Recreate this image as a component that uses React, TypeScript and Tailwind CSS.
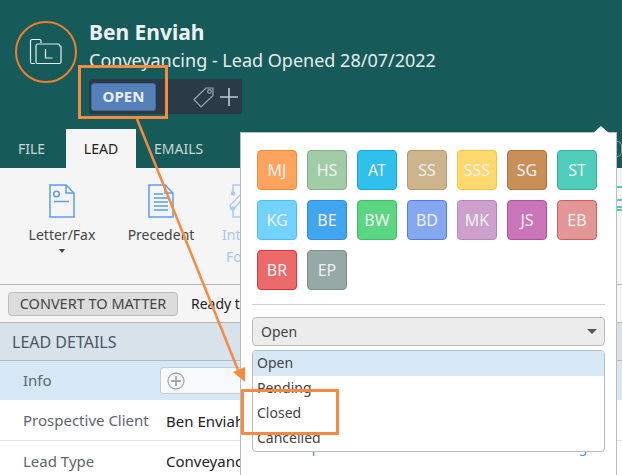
const chips = [
  { label: "MJ", cls: "bg-[#ffa45f] border-[#f98a33]" },
  { label: "HS", cls: "bg-[#a1cca5] border-[#7eb285]" },
  { label: "AT", cls: "bg-[#2fc0ee] border-[#1ba5d8]" },
  { label: "SS", cls: "bg-[#ceb48d] border-[#b89a68]" },
  { label: "SSS", cls: "bg-[#ffd96e] border-[#f8c838]" },
  { label: "SG", cls: "bg-[#c98f59] border-[#b0743e]" },
  { label: "ST", cls: "bg-[#4fccba] border-[#38ae9c]" },
  { label: "KG", cls: "bg-[#73d2fe] border-[#45c0fa]" },
  { label: "BE", cls: "bg-[#42a5f0] border-[#2c8ed8]" },
  { label: "BW", cls: "bg-[#5bd682] border-[#3fbb66]" },
  { label: "BD", cls: "bg-[#86a8f0] border-[#4f7eea]" },
  { label: "MK", cls: "bg-[#cda0cd] border-[#b885b8]" },
  { label: "JS", cls: "bg-[#ca75ba] border-[#b153a0]" },
  { label: "EB", cls: "bg-[#e39696] border-[#d26060]" },
  { label: "BR", cls: "bg-[#ea6a6a] border-[#dc3838]" },
  { label: "EP", cls: "bg-[#95a9a6] border-[#7a908d]" },
];

const statuses = ["Open", "Pending", "Closed", "Cancelled"];

const FolderIcon = () => (
  <svg width="34" height="28" viewBox="0 0 34 28" fill="none" stroke="#e6f0f0" strokeWidth="1.2">
    <path d="M6 25.5H3a1.5 1.5 0 0 1-1.5-1.5V3A1.5 1.5 0 0 1 3 1.5h7.5a1.5 1.5 0 0 1 1.500 1.500V5" />
    <path d="M7 7.500a1.500 1.500 0 0 1 1.500-1.500h21a1.500 1.500 0 0 1 1 1v1h1a.6.6 0 0 1 .5.5V24a1.500 1.500 0 0 1-1.500 1.500H8.500A1.500 1.500 0 0 1 7 24z" />
    <path d="M16.500 11v9h7" />
  </svg>
);

const TagIcon = () => (
  <svg width="22" height="22" viewBox="0 0 22 22" fill="none" stroke="#9aa8b0" strokeWidth="1.200">
    <path d="M1 13.500 13 2h7v7.500L8 21z" />
    <circle cx="16.500" cy="5.500" r="1.800" />
  </svg>
);

const PlusIcon = () => (
  <svg width="20" height="20" viewBox="0 0 20 20" stroke="#c3cacf" strokeWidth="1.600">
    <path d="M10 1v18M1 10h18" />
  </svg>
);

const LetterIcon = () => (
  <svg width="26" height="34" viewBox="0 0 26 34" fill="none" stroke="#5b9eea" strokeWidth="1.500">
    <path d="M1 1h16l8 8v24H1z" />
    <path d="M17 1v8h8" />
    <circle cx="7.500" cy="10" r="2.800" />
    <path d="M5 17.500h15" />
  </svg>
);

const PrecedentIcon = () => (
  <svg width="26" height="34" viewBox="0 0 26 34" fill="none" stroke="#5b9eea" strokeWidth="1.500">
    <path d="M1 1h16l8 8v24H1z" />
    <path d="M17 1v8h8M6 10h9M6 14h14M6 18h14M6 22h14M6 26h14" />
  </svg>
);

const IntakeIcon = () => (
  <svg width="30" height="34" viewBox="0 0 30 34" fill="none" stroke="#aacdf2" strokeWidth="1.500">
    <path d="M4 9V1h24v32H4v-8" />
    <circle cx="4" cy="9.500" r="1.500" fill="#aacdf2" />
    <circle cx="4" cy="24.500" r="1.500" fill="#aacdf2" />
    <path d="M1 21.500 2 25l3.500-1L14 14l-3-3z" />
  </svg>
);

const Field = ({ label, children, cls }: { label: string; children: React.ReactNode; cls: string }) => (
  <div className={`flex items-center ${cls}`}>
    <div className="w-[160px] shrink-0 pl-[23px] text-[#5c6670] whitespace-nowrap">{label}</div>
    {children}
  </div>
);

export default function App() {
  return (
    <div
      className="relative w-[622px] h-[475px] overflow-hidden bg-white text-[15px]"
      style={{ fontFamily: '"Noto Sans", "Open Sans", sans-serif' }}
    >
      {/* Header */}
      <header className="h-[168px] bg-[#165a5a] flex flex-col">
        <div className="h-[129px] flex pl-[15px] pt-[21px]">
          <div className="w-[62px] h-[62px] rounded-full border-2 border-[#ee7f2d] flex items-center justify-center">
            <FolderIcon />
          </div>
          <div className="pl-[12px] -mt-[3px]">
            <div className="text-[21px] leading-[29px] font-bold text-[#eef2f4]">Ben Enviah</div>
            <div className="text-[18px] leading-[26px] text-[#e6eef0] whitespace-nowrap">
              Conveyancing - Lead Opened 28/07/2022
            </div>
            <div className="mt-[6px] w-[153px] h-[35px] bg-[#2a3a47] rounded-[2px] flex items-center pl-[2px]">
              <div className="w-[65px] h-[28px] rounded-[3px] bg-[#5580b8] border border-[#46699c] flex items-center justify-center text-[15px] font-bold text-[#e9eff7]">
                OPEN
              </div>
              <div className="ml-[37px] flex items-center gap-[4px]">
                <TagIcon />
                <PlusIcon />
              </div>
            </div>
          </div>
        </div>
        <nav className="flex items-stretch h-[39px] text-[14px] leading-none">
          <div className="w-[66px] pl-[18px] flex items-center text-[#c9d6d8]">FILE</div>
          <div className="w-[70px] bg-[#f5f5f5] flex items-center justify-center text-[#222]">LEAD</div>
          <div className="pl-[18px] flex items-center text-[#c9d6d8]">EMAILS</div>
          <div className="ml-auto w-[5px] flex items-center">
            <div className="w-[5px] h-[16px] rounded-r-full border-r border-y border-[#7fa3a3]" />
          </div>
        </nav>
      </header>

      {/* Ribbon */}
      <section className="h-[117px] bg-[#f5f5f5] border-b border-[#b8b8b8] flex text-[14px] text-[#444]">
        <div className="w-[124px] flex flex-col items-center pt-[16px]">
          <LetterIcon />
          <div className="mt-[7px] leading-[20px]">Letter/Fax</div>
          <div className="mt-[4px] w-0 h-0 border-x-[3px] border-x-transparent border-t-[4px] border-t-[#444]" />
        </div>
        <div className="w-[74px] flex flex-col items-center pt-[16px]">
          <PrecedentIcon />
          <div className="mt-[7px] leading-[20px]">Precedent</div>
        </div>
        <div className="pl-[24px] pt-[16px] text-[#a9c9ea] leading-[22px]">
          <div className="ml-[7px]">
            <IntakeIcon />
          </div>
          <div className="mt-[6px]">Intake</div>
          <div className="pl-[4px]">Form</div>
        </div>
        <div className="ml-auto w-[5px] pt-[18px] flex flex-col">
          <div className="h-[2px] bg-[#4fccba]" />
          <div className="mt-[11px] h-[2px] bg-[#4fccba]" />
          <div className="mt-[5px] h-[2px] bg-[#4fccba]" />
          <div className="mt-[1px] h-[2px] bg-[#4fccba]" />
        </div>
      </section>

      {/* Convert bar */}
      <div className="h-[37px] bg-[#f5f5f5] flex items-center pl-[8px] gap-[13px] text-[14px]">
        <div className="w-[170px] h-[24px] rounded-[4px] bg-[#dcdcdc] border border-[#bdbdbd] flex items-center justify-center text-[14.5px] text-[#444] whitespace-nowrap">
          CONVERT TO MATTER
        </div>
        <div className="text-[#222] whitespace-nowrap">Ready to convert</div>
      </div>

      {/* Lead details */}
      <div className="h-[39px] bg-[#d8e2eb] border-y border-[#b8b8b8] flex items-center pl-[12px] text-[16px] text-[#4a5560]">
        LEAD DETAILS
      </div>
      <Field label="Info" cls="h-[39px] bg-[#d6e7f6]">
        <div className="w-[200px] h-[27px] rounded-[3px] bg-[#f6fafd] border border-[#c4ccd4] flex items-center pl-[6px]">
          <svg width="18" height="18" viewBox="0 0 18 18" fill="none" stroke="#a4a9ad" strokeWidth="1.300">
            <circle cx="9" cy="9" r="8" />
            <path d="M9 4v10M4 9h10" strokeWidth="1.800" />
          </svg>
        </div>
      </Field>
      <Field label="Prospective Client" cls="h-[41px] border-b border-[#e0e0e0]">
        <div className="pl-[6px] mt-[3px] text-[#222] whitespace-nowrap">Ben Enviah</div>
      </Field>
      <Field label="Lead Type" cls="h-[40px]">
        <div className="pl-[6px] text-[#222] whitespace-nowrap">Conveyancing</div>
      </Field>

      {/* Popover */}
      <div className="absolute z-0 left-[240px] top-[132px] w-[377px] h-[350px] bg-white border border-[#bdbdbd] px-[11px] pt-[17px]">
        <div className="absolute -top-[7px] right-[7px] w-0 h-0 border-x-[8px] border-x-transparent border-b-[7px] border-b-white" />
        <div className="grid grid-cols-[repeat(7,40px)] gap-[10px] pl-[5px] pb-[14px] border-b border-[#d0d0d0]">
          {chips.map((chip) => (
            <div
              key={chip.label}
              className={`h-[40px] rounded-[4px] border flex items-center justify-center text-[16px] text-[#f1f1f1] ${chip.cls}`}
            >
              {chip.label}
            </div>
          ))}
        </div>
        <div className="mt-[12px] h-[29px] rounded-[4px] bg-[#ececec] border border-[#bbb] flex items-center justify-between pl-[8px] pr-[7px] text-[14px] text-[#444]">
          Open
          <span className="w-0 h-0 border-x-[5px] border-x-transparent border-t-[5px] border-t-[#555]" />
        </div>
        <div className="relative z-10 mt-[4px] h-[102px] rounded-[4px] bg-white border border-[#bbb] overflow-hidden text-[14px] leading-[23px] text-[#444]">
          {statuses.map((status, i) => (
            <div key={status} className={`h-[25px] pl-[4px] ${i === 0 ? "bg-[#d6e7f6]" : ""}`}>
              {status}
            </div>
          ))}
        </div>
        <div className="-mt-[15px] flex justify-between px-[10px] text-[14px] leading-[20px] text-[#4a90d9]">
          <span>Master permissions</span>
          <span className="pr-[1px]">Edit tags</span>
        </div>
      </div>

      {/* Annotations */}
      <div className="absolute left-[78px] top-[65px] w-[90px] h-[54px] border-[3px] border-[#f58a42]" />
      <div className="absolute left-[241px] top-[389px] w-[98px] h-[46px] border-[3px] border-[#f58a42] rounded-[1px]" />
      <svg className="absolute left-0 top-0" width="622" height="475" fill="none">
        <path d="M137 119 238 370" stroke="#f58a42" strokeWidth="2.500" />
        <path d="M245 382 233 372 245 367z" fill="#f58a42" />
      </svg>
    </div>
  );
}
